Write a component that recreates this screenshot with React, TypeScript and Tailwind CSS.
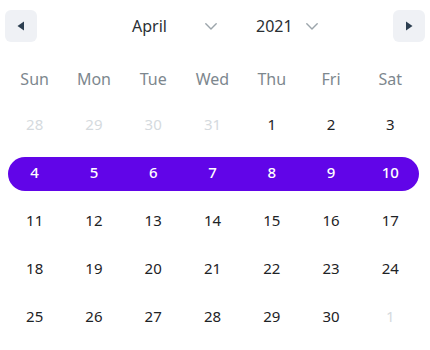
import React from "react";

const WEEKDAYS = ["Sun", "Mon", "Tue", "Wed", "Thu", "Fri", "Sat"];

type Day = { n: number; muted?: boolean };

const WEEKS: Day[][] = [
  [{ n: 28, muted: true }, { n: 29, muted: true }, { n: 30, muted: true }, { n: 31, muted: true }, { n: 1 }, { n: 2 }, { n: 3 }],
  [4, 5, 6, 7, 8, 9, 10].map((n) => ({ n })),
  [11, 12, 13, 14, 15, 16, 17].map((n) => ({ n })),
  [18, 19, 20, 21, 22, 23, 24].map((n) => ({ n })),
  [{ n: 25 }, { n: 26 }, { n: 27 }, { n: 28 }, { n: 29 }, { n: 30 }, { n: 1, muted: true }],
];

const SELECTED_WEEK = 1;

function Chevron() {
  return (
    <svg width="12" height="7" viewBox="0 0 12 7" fill="none" className="text-[#9ca5ab]">
      <path d="M0.8 0.8 L6 6 L11.2 0.8" stroke="currentColor" strokeWidth="1.4" strokeLinecap="round" strokeLinejoin="round" />
    </svg>
  );
}

function NavButton({ dir }: { dir: "prev" | "next" }) {
  return (
    <button className="flex h-[32px] w-[32px] items-center justify-center rounded-[6px] bg-[#eff1f5]">
      <svg width="8" height="10" viewBox="0 0 8 10">
        {dir === "prev" ? (
          <path d="M7 0.5 L7 9.5 L0.5 5 Z" fill="#2c3e50" />
        ) : (
          <path d="M1 0.5 L1 9.5 L7.5 5 Z" fill="#2c3e50" />
        )}
      </svg>
    </button>
  );
}

export default function App() {
  return (
    <div className="h-[350px] w-[430px] bg-white font-['Noto_Sans',sans-serif]">
      <div className="flex items-center px-[5px] pt-[10px]">
        <NavButton dir="prev" />
        <div className="flex flex-1 items-center pl-[95px] text-[16px] text-[#2a2f33]">
          <div className="flex w-[85px] items-center justify-between">
            <span>April</span>
            <Chevron />
          </div>
          <div className="ml-[39px] flex w-[62px] items-center justify-between">
            <span>2021</span>
            <Chevron />
          </div>
        </div>
        <NavButton dir="next" />
      </div>

      <div className="ml-[5px] mt-[20px] w-[415px]">
        <div className="grid h-[34px] grid-cols-7 items-center text-center text-[16px] text-[#7d878e]">
          {WEEKDAYS.map((d) => (
            <span key={d}>{d}</span>
          ))}
        </div>

        <div className="mt-[11px] flex flex-col gap-[14px]">
          {WEEKS.map((week, i) => (
            <div
              key={i}
              className={
                i === SELECTED_WEEK
                  ? "relative grid h-[34px] grid-cols-7 items-center text-center text-[15px] font-medium text-white before:absolute before:bottom-[-2px] before:left-[3px] before:right-[1px] before:top-[2px] before:rounded-full before:bg-[#6105e8] before:content-['']"
                  : "grid h-[34px] grid-cols-7 items-center text-center text-[15px] text-[#1e2326]"
              }
            >
              {week.map((d, j) => (
                <span key={j} className={d.muted ? "relative text-[#d5dade]" : "relative"}>
                  {d.n}
                </span>
              ))}
            </div>
          ))}
        </div>
      </div>
    </div>
  );
}
